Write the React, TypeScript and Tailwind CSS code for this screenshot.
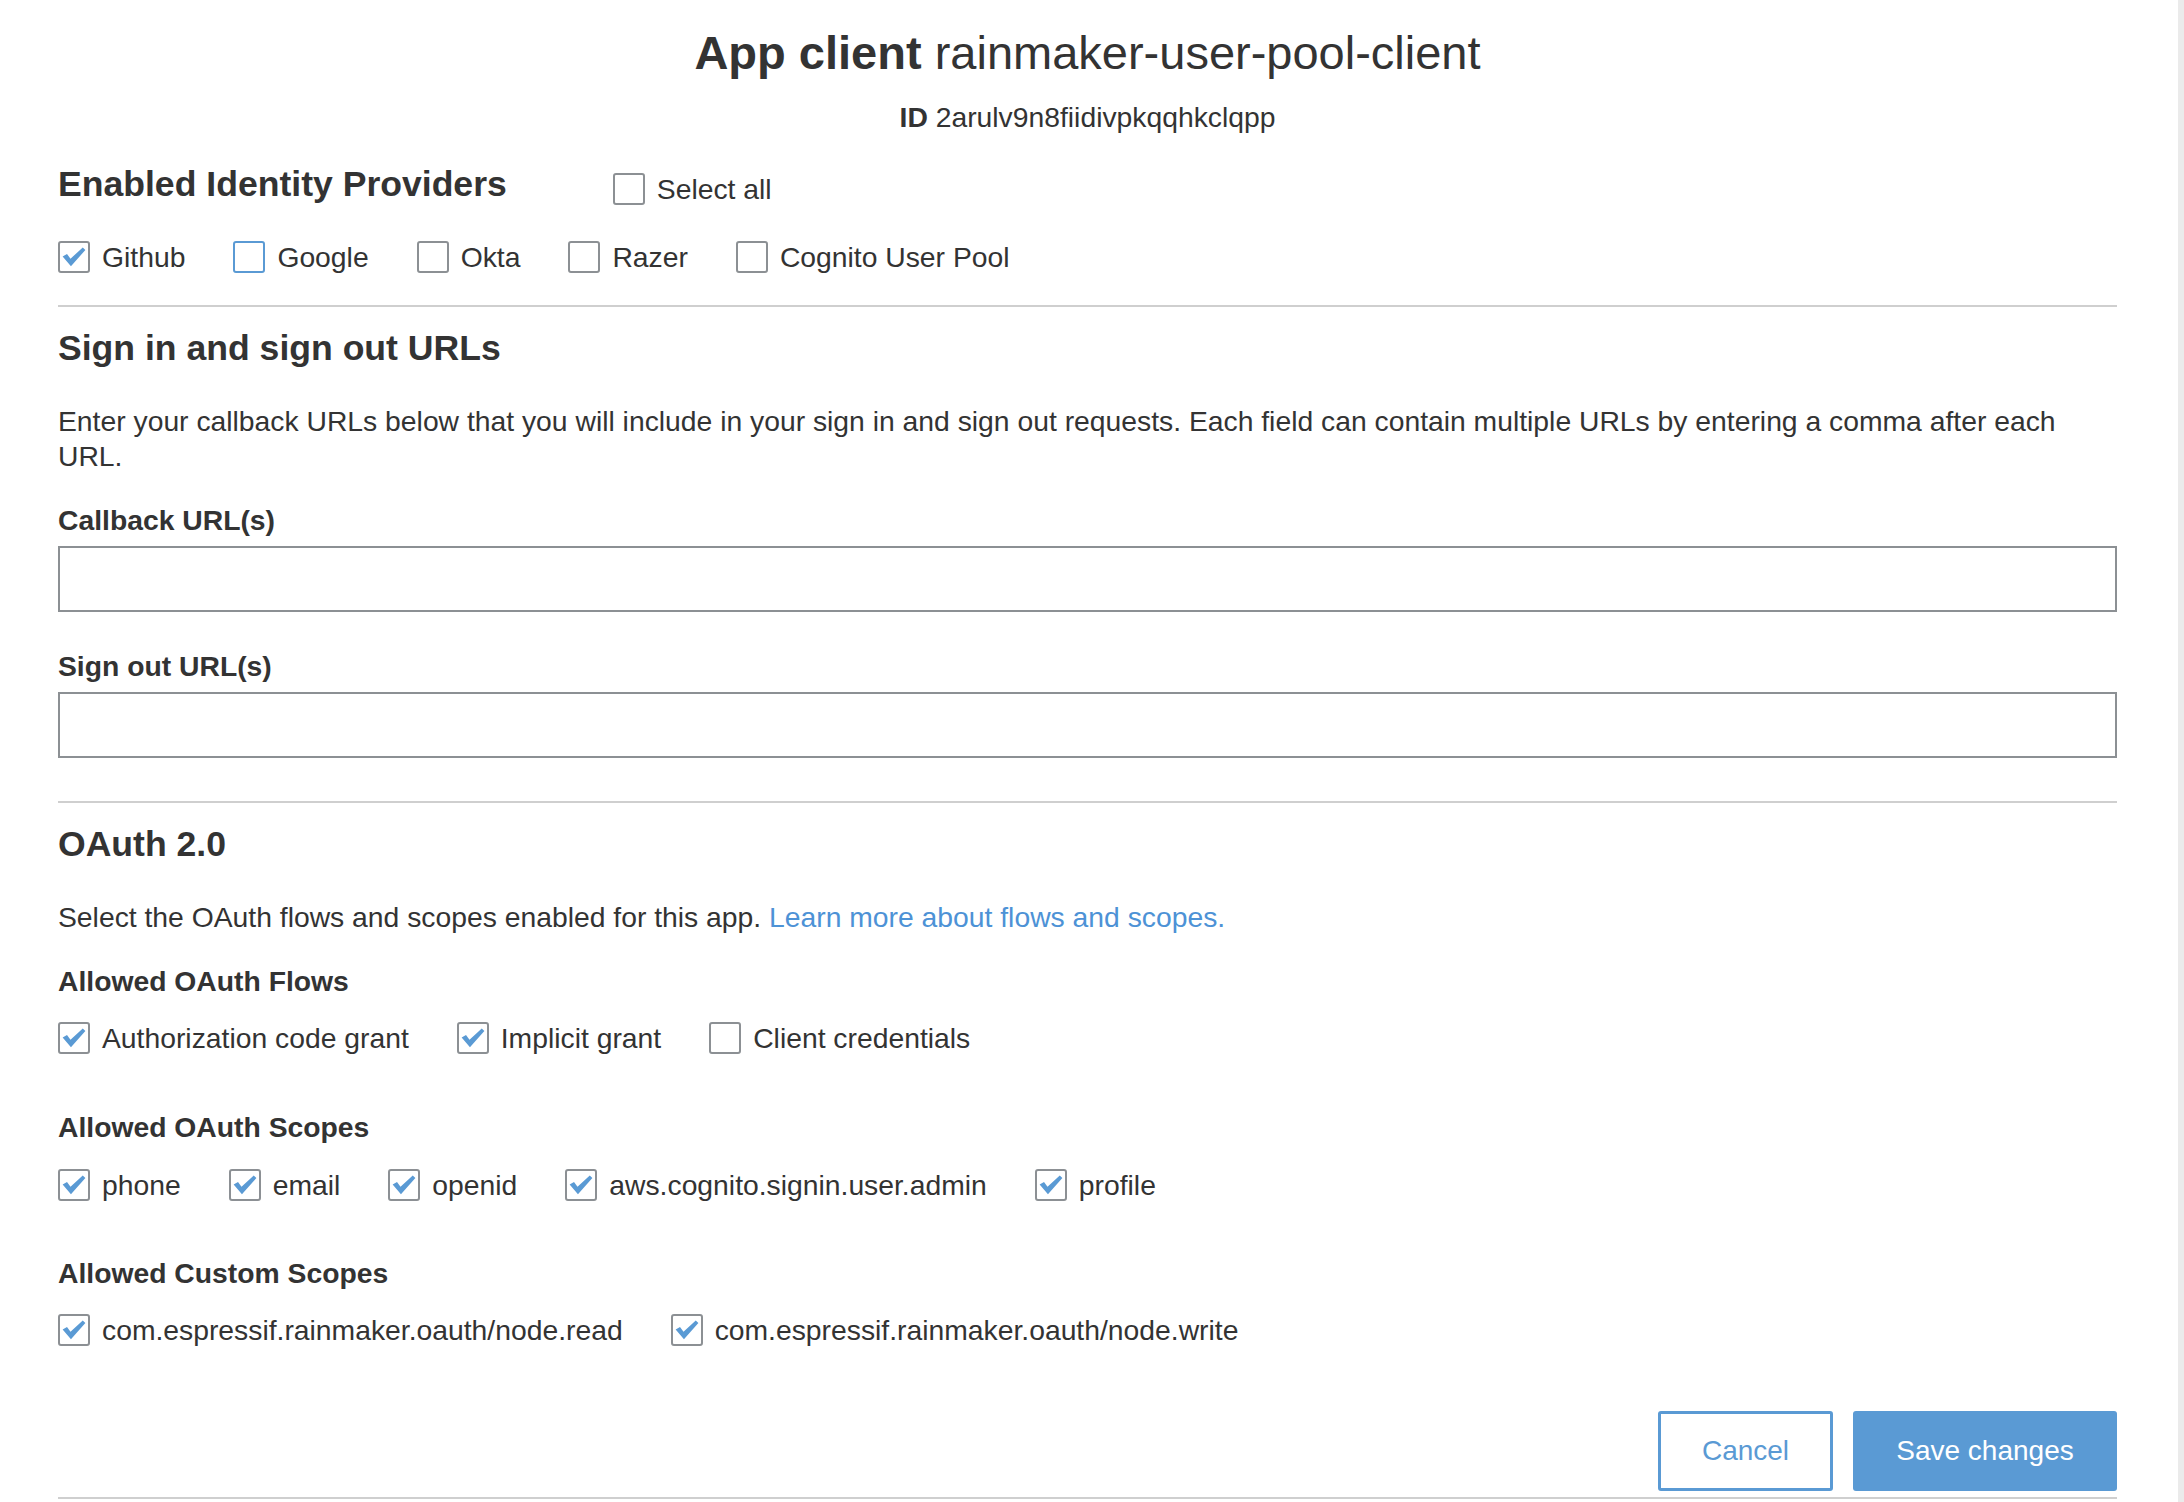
import React from 'react';

const font = { fontFamily: '"Liberation Sans", Arial, Helvetica, sans-serif' };

function Box({ checked, focus }: { checked?: boolean; focus?: boolean }) {
  return (
    <span
      className={
        'relative flex h-[32px] w-[32px] shrink-0 items-center justify-center rounded-[3px] border-2 bg-white ' +
        (focus ? 'border-[#5a9ad4]' : 'border-[#8c9094]')
      }
    >
      {checked && (
        <svg viewBox="0 0 32 32" className="h-[32px] w-[32px]">
          <path d="M3 15.5 L8 12.5 L12 18 L26 5 L29 8 L12.5 26.5 Z" fill="#5a9ad4" />
        </svg>
      )}
    </span>
  );
}

interface Item {
  label: string;
  checked?: boolean;
  focus?: boolean;
}

function CheckRow({ items }: { items: Item[] }) {
  return (
    <div className="flex items-center gap-x-[48px]">
      {items.map((it) => (
        <label key={it.label} className="flex items-center gap-[12px] text-[28.3px] leading-[32px] text-[#333]">
          <Box checked={it.checked} focus={it.focus} />
          <span>{it.label}</span>
        </label>
      ))}
    </div>
  );
}

function Divider({ className }: { className: string }) {
  return <div className={'h-[2px] w-full bg-[#cfcfcf] ' + className} />;
}

function Label({ children, className }: { children: React.ReactNode; className: string }) {
  return <div className={'text-[28.3px] font-bold leading-[36px] text-[#333] ' + className}>{children}</div>;
}

function Heading({ children, className }: { children: React.ReactNode; className: string }) {
  return <h2 className={'text-[35.6px] font-bold leading-[44px] text-[#333] ' + className}>{children}</h2>;
}

export default function App() {
  return (
    <div className="flex min-h-[1502px] w-full bg-white" style={font}>
      <div className="flex-1 pl-[58px] pr-[61px] text-[#333]">
        <h1 className="pt-[25px] text-center text-[47px] leading-[56px]">
          <span className="font-bold">App client</span> rainmaker-user-pool-client
        </h1>
        <div className="mt-[18px] text-center text-[28.3px] leading-[36px]">
          <span className="font-bold">ID</span> 2arulv9n8fiidivpkqqhkclqpp
        </div>

        <div className="mt-[27px] flex items-center">
          <Heading className="">Enabled Identity Providers</Heading>
          <label className="ml-[106px] mt-[10px] flex items-center gap-[12px] text-[28.3px] leading-[32px]">
            <Box />
            <span>Select all</span>
          </label>
        </div>
        <div className="mt-[35px]">
          <CheckRow
            items={[
              { label: 'Github', checked: true },
              { label: 'Google', focus: true },
              { label: 'Okta' },
              { label: 'Razer' },
              { label: 'Cognito User Pool' },
            ]}
          />
        </div>

        <Divider className="mt-[32px]" />

        <Heading className="mt-[19px]">Sign in and sign out URLs</Heading>
        <p className="mt-[34px] max-w-[2020px] text-[28.3px] leading-[35px]">
          Enter your callback URLs below that you will include in your sign in and sign out requests. Each field can
          contain multiple URLs by entering a comma after each URL.
        </p>

        <Label className="mt-[28px]">Callback URL(s)</Label>
        <input className="mt-[8px] block h-[66px] w-full border-2 border-[#8c9094] bg-white px-3 text-[28px] outline-none" />

        <Label className="mt-[36px]">Sign out URL(s)</Label>
        <input className="mt-[8px] block h-[66px] w-full border-2 border-[#8c9094] bg-white px-3 text-[28px] outline-none" />

        <Divider className="mt-[43px]" />

        <Heading className="mt-[19px]">OAuth 2.0</Heading>
        <p className="mt-[33px] text-[28.3px] leading-[36px]">
          Select the OAuth flows and scopes enabled for this app.{' '}
          <a href="#" className="text-[#4d92d6]">
            Learn more about flows and scopes.
          </a>
        </p>

        <Label className="mt-[28px]">Allowed OAuth Flows</Label>
        <div className="mt-[23px]">
          <CheckRow
            items={[
              { label: 'Authorization code grant', checked: true },
              { label: 'Implicit grant', checked: true },
              { label: 'Client credentials' },
            ]}
          />
        </div>

        <Label className="mt-[55px]">Allowed OAuth Scopes</Label>
        <div className="mt-[24px]">
          <CheckRow
            items={[
              { label: 'phone', checked: true },
              { label: 'email', checked: true },
              { label: 'openid', checked: true },
              { label: 'aws.cognito.signin.user.admin', checked: true },
              { label: 'profile', checked: true },
            ]}
          />
        </div>

        <Label className="mt-[54px]">Allowed Custom Scopes</Label>
        <div className="mt-[23px]">
          <CheckRow
            items={[
              { label: 'com.espressif.rainmaker.oauth/node.read', checked: true },
              { label: 'com.espressif.rainmaker.oauth/node.write', checked: true },
            ]}
          />
        </div>

        <div className="mt-[65px] flex justify-end gap-[20px]">
          <button className="h-[80px] w-[175px] rounded-[3px] border-[3px] border-[#5a9ad4] bg-white text-[28px] text-[#5a9ad4]">
            Cancel
          </button>
          <button className="h-[80px] w-[264px] rounded-[3px] bg-[#5a9ad4] text-[28px] text-white">Save changes</button>
        </div>
        <Divider className="mt-[6px]" />
      </div>
      <div className="w-[6px] shrink-0 bg-[#ebebeb]" />
    </div>
  );
}
